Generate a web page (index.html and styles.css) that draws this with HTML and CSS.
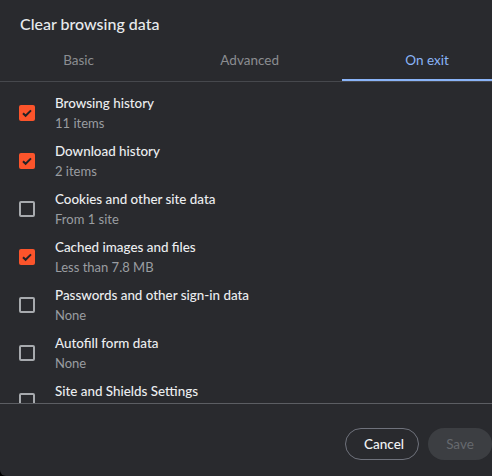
FILE: index.html
```html
<!DOCTYPE html>
<html>
<head>
<meta charset="utf-8">
<link rel="stylesheet" href="styles.css">
</head>
<body>
<div class="dialog">
  <div class="title">Clear browsing data</div>
  <div class="tabs">
    <div class="tab">Basic</div>
    <div class="tab">Advanced</div>
    <div class="tab active">On exit</div>
  </div>
  <div class="list">
    <div class="row">
      <span class="cb on"><svg viewBox="0 0 16 16" width="16" height="16"><path d="M4 8.2l2.6 2.6L12 5.4" fill="none" stroke="#222327" stroke-width="2"/></svg></span>
      <div class="txt"><div class="t">Browsing history</div><div class="s">11 items</div></div>
    </div>
    <div class="row">
      <span class="cb on"><svg viewBox="0 0 16 16" width="16" height="16"><path d="M4 8.2l2.6 2.6L12 5.4" fill="none" stroke="#222327" stroke-width="2"/></svg></span>
      <div class="txt"><div class="t">Download history</div><div class="s">2 items</div></div>
    </div>
    <div class="row">
      <span class="cb"></span>
      <div class="txt"><div class="t">Cookies and other site data</div><div class="s">From 1 site</div></div>
    </div>
    <div class="row">
      <span class="cb on"><svg viewBox="0 0 16 16" width="16" height="16"><path d="M4 8.2l2.6 2.6L12 5.4" fill="none" stroke="#222327" stroke-width="2"/></svg></span>
      <div class="txt"><div class="t">Cached images and files</div><div class="s">Less than 7.8 MB</div></div>
    </div>
    <div class="row">
      <span class="cb"></span>
      <div class="txt"><div class="t">Passwords and other sign-in data</div><div class="s">None</div></div>
    </div>
    <div class="row">
      <span class="cb"></span>
      <div class="txt"><div class="t">Autofill form data</div><div class="s">None</div></div>
    </div>
    <div class="row">
      <span class="cb"></span>
      <div class="txt"><div class="t">Site and Shields Settings</div><div class="s-gap"></div></div>
    </div>
  </div>
  <div class="footer">
    <button class="btn cancel">Cancel</button>
    <button class="btn save">Save</button>
  </div>
</div>
</body>
</html>
```
FILE: styles.css
```css
html, body {
  margin: 0;
  padding: 0;
  background: #000;
  overflow: hidden;
}
body {
  width: 492px;
  height: 476px;
  font-family: Lato, "Noto Sans", sans-serif;
}
.dialog {
  width: 512px;
  height: 476px;
  background: #292a2e;
  color: #e8eaed;
  border-bottom-left-radius: 6px;
  display: flex;
  flex-direction: column;
}
.title {
  font-size: 16px;
  line-height: 20px;
  padding: 14px 20px 0;
  height: 34px;
  box-sizing: border-box;
  font-weight: 500;
}
.tabs {
  display: flex;
  height: 47px;
  border-bottom: 1px solid #46484d;
}
.tab {
  flex: 1 1 auto;
  text-align: center;
  font-size: 13.5px;
  line-height: 20px;
  padding-top: 16px;
  color: #8b8d91;
  box-sizing: border-box;
}
.tab.active {
  color: #8ab4f8;
  border-bottom: 2px solid #8ab4f8;
}
.list {
  height: 322px;
  overflow: hidden;
  padding-top: 7px;
  box-sizing: border-box;
  border-bottom: 1px solid #5c5e63;
}
.row {
  height: 48px;
  display: flex;
  align-items: center;
}
.cb {
  width: 16px;
  height: 16px;
  margin-left: 19px;
  margin-right: 20px;
  box-sizing: border-box;
  border: 2px solid #a7aaae;
  border-radius: 2px;
  display: flex;
  align-items: center;
  justify-content: center;
  flex: none;
}
.cb.on {
  border: none;
  background: #fb542b;
}
.cb svg { display: block; }
.txt .t {
  font-size: 13.4px;
  line-height: 20px;
  color: #eceef0;
  font-weight: 500;
}
.txt .s {
  font-size: 13px;
  line-height: 20px;
  color: #9a9da1;
}
.txt .s-gap {
  height: 20px;
}
.footer {
  display: flex;
  justify-content: flex-end;
  gap: 9px;
  padding: 24px 20px 0;
}
.btn {
  font-family: inherit;
  font-size: 13.5px;
  height: 32px;
  border-radius: 16px;
  padding: 0 18px;
}
.cancel {
  background: transparent;
  border: 1px solid #6f727c;
  color: #f1f3f4;
  width: 74px;
  font-weight: 500;
}
.save {
  background: #3c3e42;
  border: none;
  color: #66696e;
  width: 64px;
}
```
